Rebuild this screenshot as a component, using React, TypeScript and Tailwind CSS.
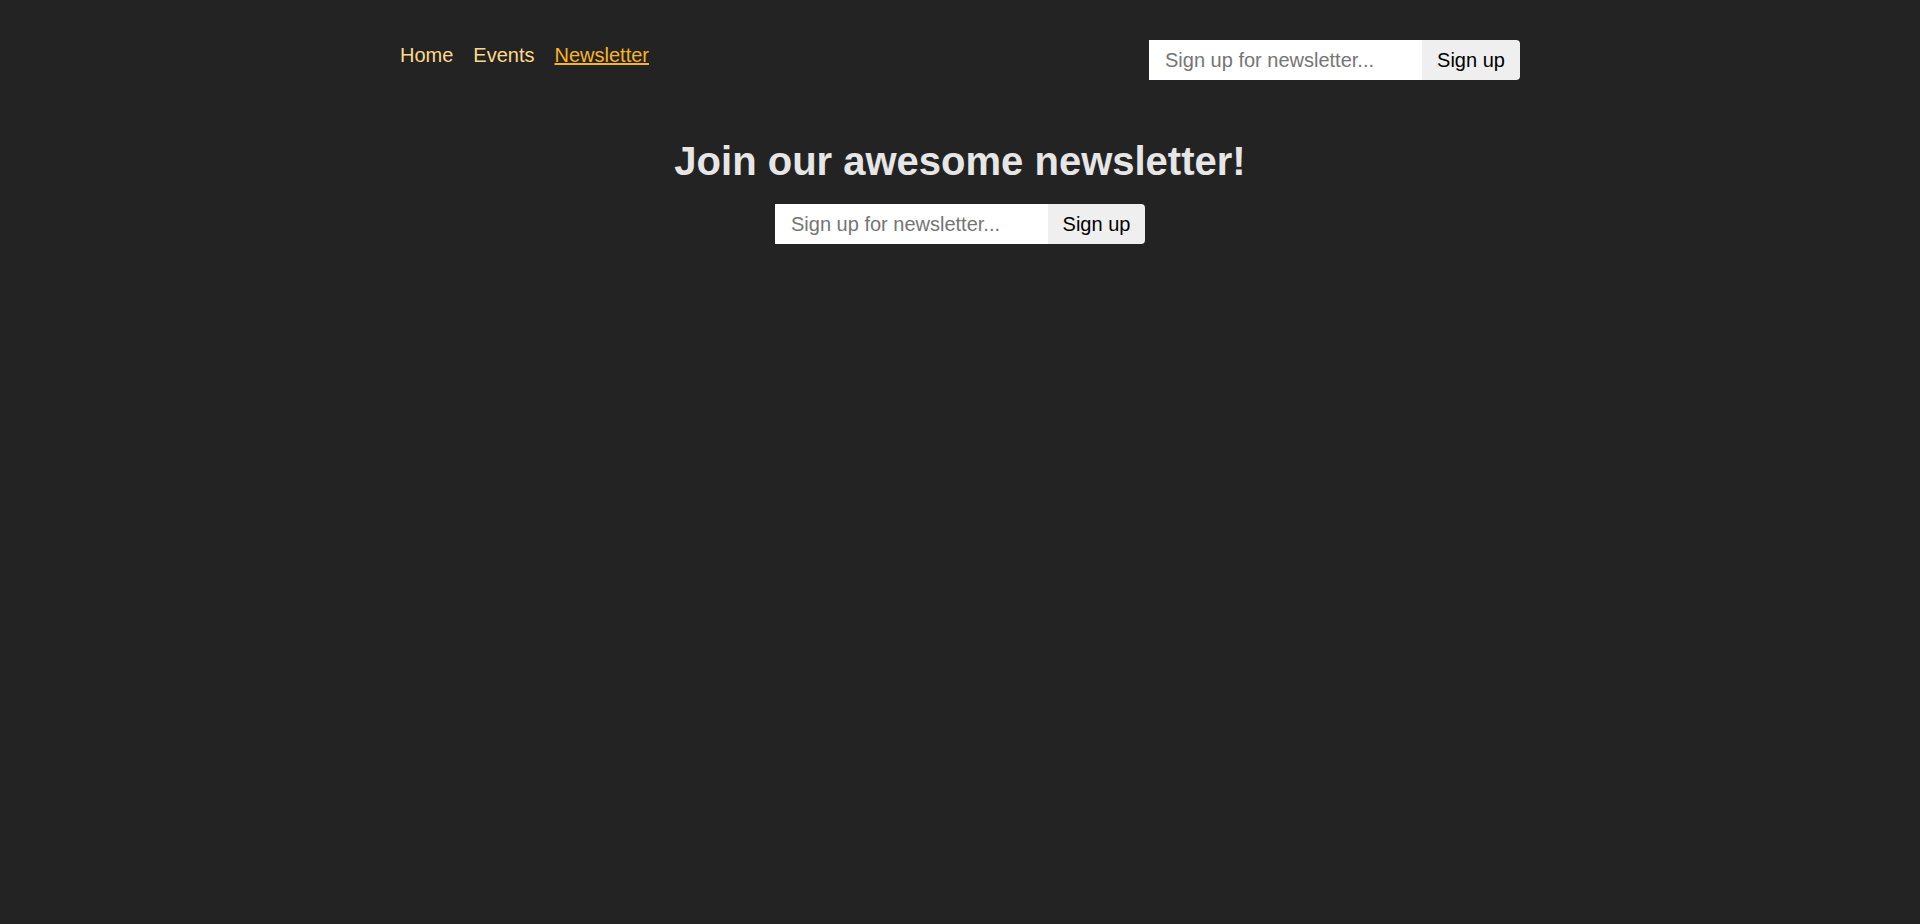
import React from "react";

function SignupForm({ btnW = 98 }: { btnW?: number }) {
  return (
    <form className="flex h-[40px]" onSubmit={(e) => e.preventDefault()}>
      <input
        type="text"
        placeholder="Sign up for newsletter..."
        className="w-[273px] h-[40px] bg-white px-[16px] text-[20px] leading-[23px] text-black placeholder:text-[#757575] outline-none border-0 rounded-none"
      />
      <button
        type="submit"
        style={{ width: btnW }}
        className="h-[40px] bg-[#efefef] text-black text-[20px] leading-[23px] rounded-r-[4px] flex items-center justify-center"
      >
        Sign up
      </button>
    </form>
  );
}

export default function App() {
  return (
    <div
      className="min-h-[924px] w-full bg-[#232323]"
      style={{ fontFamily: '"Liberation Sans", Arial, sans-serif' }}
    >
      <div className="mx-auto w-[1120px] pt-[40px]">
        <header className="flex justify-between items-start">
          <nav className="mt-[4px] flex gap-[20px] text-[20px] leading-[23px]">
            <a href="#" className="text-[#fdd98c]">Home</a>
            <a href="#" className="text-[#fdd98c]">Events</a>
            <a href="#" className="text-[#f8b428] underline">Newsletter</a>
          </nav>
          <SignupForm btnW={98} />
        </header>
        <main className="flex flex-col items-center">
          <h1 className="mt-[58px] text-[40px] leading-[46px] font-bold text-[#e6e6e6]">
            Join our awesome newsletter!
          </h1>
          <div className="mt-[20px]">
            <SignupForm btnW={97} />
          </div>
        </main>
      </div>
    </div>
  );
}
